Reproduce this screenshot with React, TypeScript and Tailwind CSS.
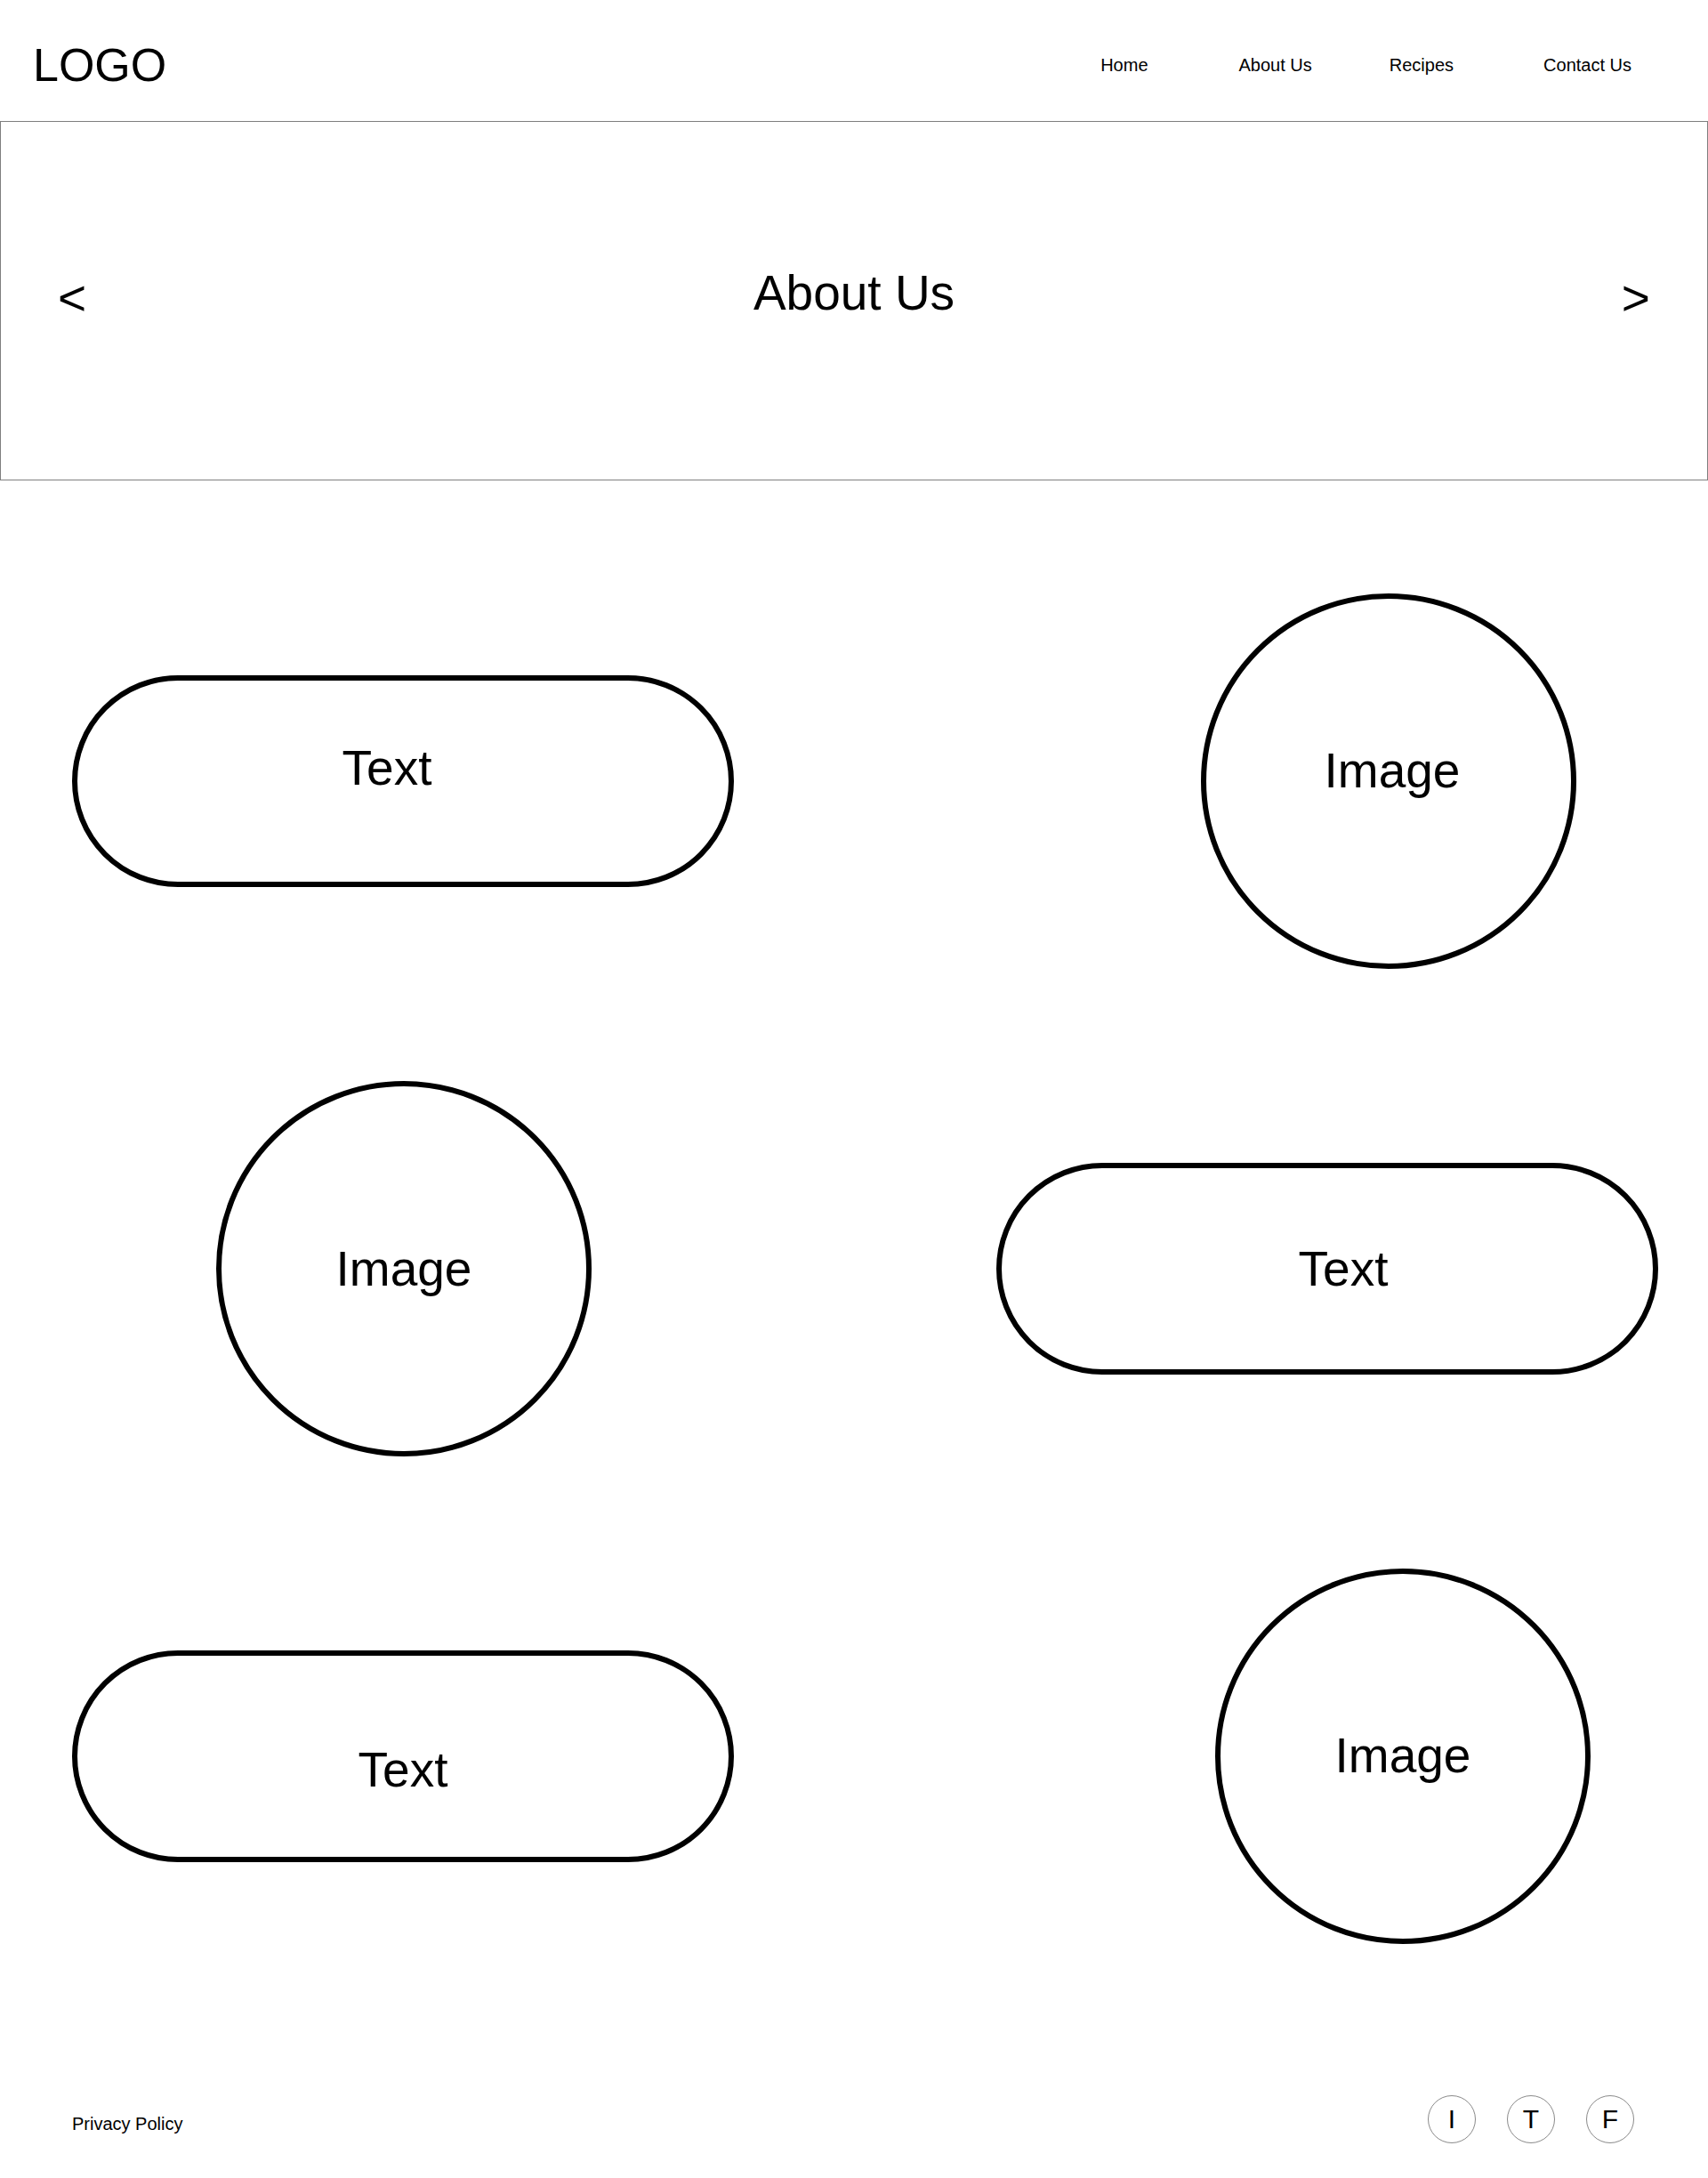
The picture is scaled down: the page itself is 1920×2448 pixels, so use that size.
import React from 'react'

const navLinks = [
  { label: 'Home', gap: 'ml-0' },
  { label: 'About Us', gap: 'ml-[102px]' },
  { label: 'Recipes', gap: 'ml-[87px]' },
  { label: 'Contact Us', gap: 'ml-[101px]' },
]

function Pill({ offset }: { offset: string }) {
  return (
    <div
      className={`flex h-[238px] w-[744px] shrink-0 items-center justify-center rounded-full border-[6px] border-black ${offset}`}
    >
      <span className="text-[55px]">Text</span>
    </div>
  )
}

function Circle({ offset }: { offset: string }) {
  return (
    <div
      className={`flex h-[422px] w-[422px] shrink-0 items-center justify-center rounded-full border-[6px] border-black ${offset}`}
    >
      <span className="text-[55px]">Image</span>
    </div>
  )
}

export default function App() {
  return (
    <div className="min-h-[2448px] w-[1920px] bg-white font-['Liberation_Sans',Arial,sans-serif] text-black">
      {/* header */}
      <header className="flex h-[136px] items-center pl-[37px] pr-[86px] pt-[9px]">
        <div className="text-[52px] leading-none">LOGO</div>
        <nav className="ml-auto flex items-center">
          {navLinks.map((link) => (
            <a key={link.label} href="#" className={`text-[20px] leading-none ${link.gap}`}>
              {link.label}
            </a>
          ))}
        </nav>
      </header>

      {/* hero slider */}
      <section className="flex h-[404px] items-center justify-between border border-[#7f7f7f] px-[64px]">
        <button className="pb-[6px] text-[55px] leading-none">&lt;</button>
        <h1 className="pb-[18px] text-[55px] leading-none">About Us</h1>
        <button className="pb-[6px] text-[55px] leading-none">&gt;</button>
      </section>

      {/* content */}
      <main className="flex flex-col gap-[126px] pt-[127px]">
        <div className="flex h-[422px] items-center">
          <div className="ml-[81px]">
            <Pill offset="pr-[36px] pb-[30px]" />
          </div>
          <div className="ml-[525px]">
            <Circle offset="pl-[8px] pb-[24px]" />
          </div>
        </div>

        <div className="flex h-[422px] items-center">
          <div className="ml-[243px]">
            <Circle offset="" />
          </div>
          <div className="ml-[455px]">
            <Pill offset="pl-[36px]" />
          </div>
        </div>

        <div className="flex h-[422px] items-center">
          <div className="ml-[81px]">
            <Pill offset="pt-[30px]" />
          </div>
          <div className="ml-[541px]">
            <Circle offset="pb-[2px]" />
          </div>
        </div>
      </main>

      {/* footer */}
      <footer className="flex items-center justify-between pb-[40px] pl-[81px] pr-[83px] pt-[170px]">
        <a href="#" className="pt-[10px] text-[20px] leading-none">
          Privacy Policy
        </a>
        <div className="flex items-center gap-[35px]">
          {['I', 'T', 'F'].map((s) => (
            <a
              key={s}
              href="#"
              className="flex h-[54px] w-[54px] items-center justify-center rounded-full border border-[#8a8a8a] text-[30px] leading-none"
            >
              {s}
            </a>
          ))}
        </div>
      </footer>
    </div>
  )
}
